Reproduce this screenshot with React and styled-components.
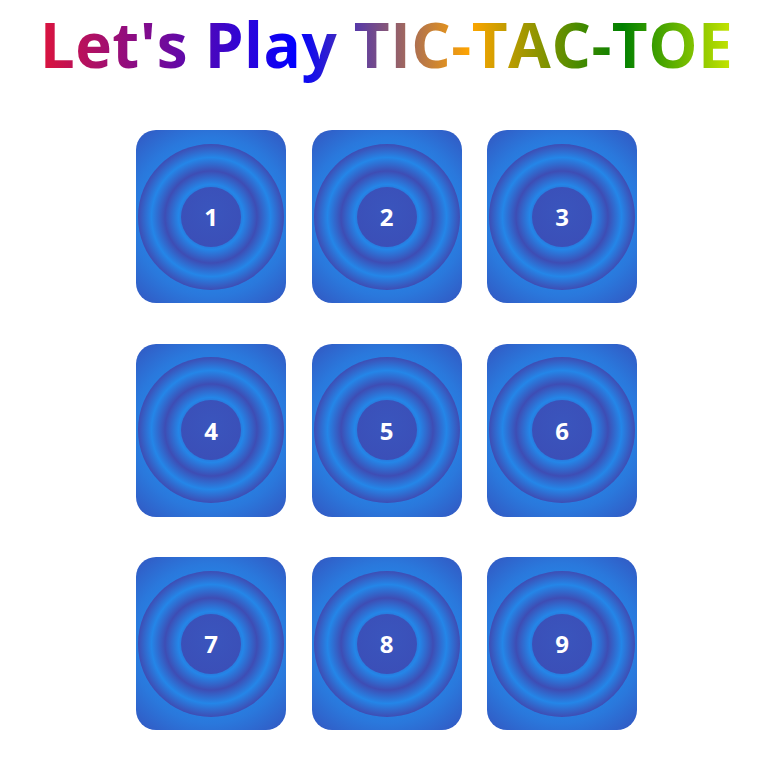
import styled, { createGlobalStyle } from "styled-components";

const GlobalStyle = createGlobalStyle`
  body {
    margin: 0;
    background: #ffffff;
    font-family: "Open Sans", "Liberation Sans", sans-serif;
  }
`;

// page wrapper
const Page = styled.div`
  display: flex;
  flex-direction: column;
  align-items: center;
  padding-top: 2px;
`;

// rainbow heading
const Title = styled.h1`
  display: inline-block;
  margin: 0;
  font-size: 62px;
  font-weight: 700;
  line-height: 84px;
  letter-spacing: 0.5px;
  background: linear-gradient(
    to right,
    crimson 0%,
    blue 37%,
    orange 62%,
    green 84%,
    #c8e600 100%
  );
  -webkit-background-clip: text;
  background-clip: text;
  color: transparent;
`;

// the 3x3 board
const Board = styled.div`
  display: grid;
  grid-template-columns: repeat(3, 150px);
  grid-auto-rows: 173px;
  column-gap: 25.5px;
  row-gap: 40.5px;
  margin-top: 44px;
`;

// one square of the board
const Cell = styled.button`
  display: flex;
  justify-content: center;
  align-items: center;
  border: none;
  padding: 0;
  border-radius: 20px;
  cursor: pointer;
  background: radial-gradient(circle at center, #2585e6 60px, #2a78dc 80px, #3452bd 118px);
`;

// the ringed target inside a square
const Ring = styled.div`
  width: 146px;
  height: 146px;
  border-radius: 50%;
  display: flex;
  justify-content: center;
  align-items: center;
  background: repeating-radial-gradient(
    circle at center,
    #3e4db4 -8px,
    #2486e8 5.5px,
    #3e4db4 19px
  );
`;

// centre disk holding the number
const Disk = styled.div`
  width: 60px;
  height: 60px;
  border-radius: 50%;
  display: flex;
  justify-content: center;
  align-items: center;
  background: radial-gradient(circle at 50% 40%, #3a55bd, #3b4db6);
  color: #ffffff;
  font-family: "Open Sans", "Liberation Sans", sans-serif;
  font-weight: 700;
  font-size: 24px;
`;

const App = () => {
  const cells = [1, 2, 3, 4, 5, 6, 7, 8, 9];

  return (
    <>
      <GlobalStyle />
      <Page>
        <Title>Let's Play TIC-TAC-TOE</Title>
        <Board>
          {cells.map((n) => (
            <Cell key={n}>
              <Ring>
                <Disk>{n}</Disk>
              </Ring>
            </Cell>
          ))}
        </Board>
      </Page>
    </>
  );
};

export default App;
